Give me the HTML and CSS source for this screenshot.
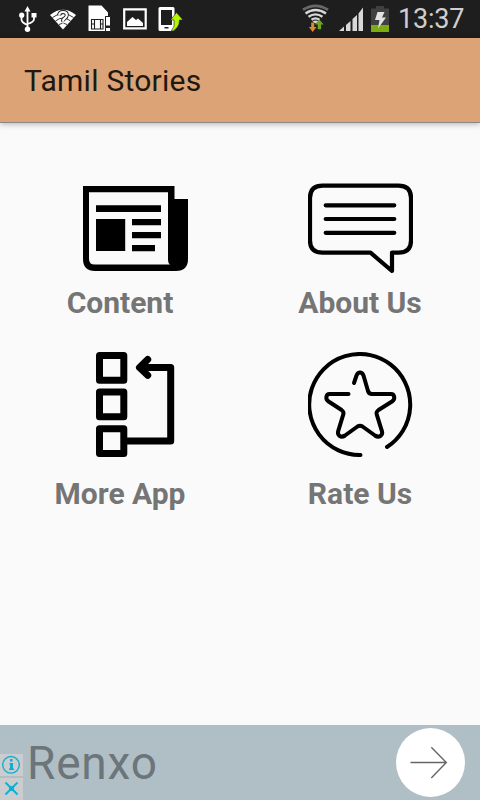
FILE: index.html
```html
<!DOCTYPE html>
<html lang="en">

<head>
    <meta charset="UTF-8">
    <meta name="viewport" content="width=device-width, initial-scale=1.0">
    <title>Tamil Stories</title>
    <link rel="stylesheet" href="styles.css">
</head>

<body>
    <!-- Status bar -->
    <div class="status-bar">
        <svg class="status-left" width="184" height="38" viewBox="0 0 184 38">
            <!-- USB -->
            <g fill="none" stroke="#fff" stroke-width="1.8">
                <path d="M27.500 30V9M21.500 16v3.500q0 3 6 5.500M34 16v3q0 3-6.500 5"></path>
                <path fill="#fff" stroke="none" d="M27.500 6l3 5.500h-6zM31.500 13h5v4.500h-5z"></path>
                <circle cx="21.700" cy="15.200" r="2.600" fill="#fff" stroke="none"></circle>
                <circle cx="27.500" cy="29.300" r="2.700" fill="#fff" stroke="none"></circle>
            </g>
            <!-- Unknown wifi -->
            <path fill="#fff" d="M50 15Q63 4.500 76 15L63 29.500z"></path>
            <path fill="none" stroke="#1e1e1e" stroke-width=".9" d="M52.500 17.500q10.500-8 21 0M55.500 21q7.500-6 15 0M59 24.500q4-3 8 0"></path>
            <path fill="none" stroke="#1e1e1e" stroke-width="4" d="M59.200 15.500q0-3.500 3.800-3.500t3.800 3q0 2-2 3.200t-1.800 3.300"></path>
            <path fill="none" stroke="#fff" stroke-width="2.200" d="M59.200 15.500q0-3.500 3.800-3.500t3.800 3q0 2-2 3.200t-1.800 3.300M63 23.500v3"></path>
            <!-- SIM card -->
            <path fill="#fff" d="M88.500 5.500h13l6.500 7v4h-3V31H88.500z"></path>
            <path fill="none" stroke="#1e1e1e" stroke-width="1.100" d="M91.500 19.500h11.500v9.500H91.500zM94.500 19.500v9.500M100.500 19.500v9.500M91.500 24h3M100.500 24h3"></path>
            <path fill="#fff" stroke="#1e1e1e" d="M105.500 16.500h5v9.500h-5zM105.500 27.500h5v4h-5z"></path>
            <!-- Picture -->
            <path fill="none" stroke="#fff" stroke-width="2.200" d="M124.200 9.300h21.500v19h-21.500z"></path>
            <path fill="#fff" d="M127 26v-4l5.500-5 3.500 3 2-1.500 5 4.500v3z"></path>
            <!-- Phone transfer -->
            <path fill="#fff" fill-rule="evenodd" d="M160 7h13q1.500 0 1.500 1.500v21q0 1.500-1.500 1.500h-13q-1.500 0-1.500-1.500v-21Q158.500 7 160 7zM161 10v15h11V10zM164.500 27v1.500h4V27z"></path>
            <path fill="#b4f500" stroke="#1e1e1e" stroke-width=".6" d="M176.500 12.500l6.500 7.500h-3.500q0 9-8.500 11.500 4.500-5 3-11.500h-3.500z"></path>
        </svg>
        <div class="status-right">
            <svg width="98" height="38" viewBox="300 0 98 38">
                <!-- Wifi -->
                <g fill="none" stroke="#d8d8d8" stroke-width="2.300">
                    <path stroke="#686868" stroke-width="2.800" d="M303 9.800q12.500-8 25 0"></path>
                    <path d="M305.500 13.500q10-7 20.500 0M308.500 16.800q7-5 14 0M311.500 19.800q4-2.800 8 0"></path>
                </g>
                <path fill="#d8d8d8" d="M312.500 21.500q3-2 6 0l-3 2z"></path>
                <path fill="#de8a2e" d="M311.200 22.500h3V27h2.300l-3.800 5-3.800-5h2.300z"></path>
                <path fill="#6ea61c" d="M317.700 29.200v-4.700h-2.500l4.200-5 4.200 5h-2.500v4.700z"></path>
                <!-- Signal -->
                <path fill="#d8d8d8" d="M339 31l5-4.500V31zM346 25l4.500-4v10H346zM352.500 19l4.500-4v16h-4.500zM358.500 13.500l4.500-6V31h-4.500z"></path>
                <!-- Battery -->
                <path fill="#404040" d="M376 6h8v2.500h5V25h-18V8.500h5z"></path>
                <path fill="#7cab13" d="M371 25h18v7h-18z"></path>
                <path fill="#e2e2e2" d="M377.500 12h7l-2.500 5.500h4l-8 11 1.500-8.500H375z"></path>
            </svg>
            <span class="clock">13:37</span>
        </div>
    </div>

    <!-- Title bar -->
    <header class="app-bar">
        <h1>Tamil Stories</h1>
    </header>

    <!-- Menu -->
    <main class="menu">
        <a class="menu-item shifted">
            <svg class="menu-icon" viewBox="83 176 105 105">
                <path fill-rule="evenodd" d="M83 186h91.500v13H188v60q0 12-12 12H95q-12 0-12-12zM89 192.200V259q0 5.600 5.600 5.600H170q-2-1.500-2-4.600v-67.800z"></path>
                <path d="M96 205.300h65v6.700H96zM96 219h29.200v32H96zM132 219h29v6.200h-29zM132 232h29v6.200h-29zM132 245h23v6.200h-23z"></path>
            </svg>
            <span>Content</span>
        </a>
        <a class="menu-item">
            <svg class="menu-icon" viewBox="308 176 105 105">
                <g fill="none" stroke="#000" stroke-width="4.200" stroke-linecap="round" stroke-linejoin="round">
                    <path d="M322.500 185.700H398.500Q411 185.700 411 198v42.500q0 12.200-12.500 12.200H392v18.300l-21.500-18.300h-48q-12.500 0-12.500-12.200V198q0-12.300 12.500-12.300z"></path>
                    <path d="M325.700 205.300h68.600M325.700 219h68.600M325.700 232.800h68.600"></path>
                </g>
            </svg>
            <span>About Us</span>
        </a>
        <a class="menu-item shifted">
            <svg class="menu-icon" viewBox="83 352 105 105">
                <g fill="none" stroke="#000" stroke-width="7" stroke-linejoin="round" stroke-linecap="round">
                    <path d="M99.500 355.500h24.300v24.700H99.500zM99.500 392h24.300v24.700H99.500zM99.500 428.700h24.300v24.700H99.500z"></path>
                    <path d="M125 441h45.700v-73.500H141"></path>
                    <path d="M147.700 359.500l-8.200 8 8.200 7.800"></path>
                </g>
            </svg>
            <span>More App</span>
        </a>
        <a class="menu-item">
            <svg class="menu-icon" viewBox="308 352 105 105">
                <g fill="none" stroke="#000" stroke-width="4" stroke-linecap="round" stroke-linejoin="round">
                    <path d="M360.500 455A50.500 50.500 0 1 1 387 447"></path>
                    <path d="M354 383l2.500-7.500q1.300-3 3.500-3t3.500 3l4.500 15.500q1 3 4 3h19q2.700 0 3.200 2.800t-2.200 4.700l-13.500 8.500q-2.500 1.800-1.800 4.300l5.300 17q.8 3.200-1.600 4.700t-5.400-.5l-12.500-9q-2.500-1.500-5 0l-12.500 9q-3 2-5.300.5t-1.600-4.700l5.200-17q.8-2.500-1.700-4.300l-13-8.500q-2.700-1.900-2.200-4.700t3.200-2.800H348.500"></path>
                </g>
            </svg>
            <span>Rate Us</span>
        </a>
    </main>

    <!-- Ad banner -->
    <footer class="ad-banner">
        <div class="ad-controls">
            <svg width="23" height="22" viewBox="0 0 23 22">
                <circle cx="11" cy="10.800" r="8.300" fill="none" stroke="#12aed0" stroke-width="1.400"></circle>
                <path fill="#12aed0" d="M10 5h2.500v2.500H10zM9.500 9H13v5.500h1V16H9v-1.500h1V10.500h-.5z"></path>
            </svg>
            <svg width="23" height="22" viewBox="0 0 23 22">
                <path fill="none" stroke="#12aed0" stroke-width="1.800" d="M5.500 4.500l12 12M17.500 4.500l-12 12"></path>
                <path fill="#12aed0" d="M9 8h5v5H9z"></path>
            </svg>
        </div>
        <span class="ad-title">Renxo</span>
        <div class="ad-arrow">
            <svg width="69" height="69" viewBox="0 0 69 69">
                <path fill="none" stroke="#666" stroke-width="1.400" d="M14.500 34.500h35.500M35.300 19.200l15 15.300-15 15.500"></path>
            </svg>
        </div>
    </footer>
</body>

</html>
```
FILE: styles.css
```css
body {
    font-family: Roboto, sans-serif;
    margin: 0;
    height: 800px;
    display: flex;
    flex-direction: column;
    background-color: #fafafa;
    overflow: hidden;
}

svg {
    display: block;
}

/* Status bar */
.status-bar {
    height: 38px;
    display: flex;
    justify-content: space-between;
    background-color: #1e1e1e;
}

.status-right {
    display: flex;
    width: 180px;
}

.clock {
    font-size: 27px;
    line-height: 39px;
    letter-spacing: -0.2px;
    color: #cfcfcf;
}

/* Title bar */
.app-bar {
    height: 84px;
    display: flex;
    align-items: center;
    padding-left: 24px;
    background-color: #dba376;
    border-bottom: 1px solid #8a8a84;
    box-shadow: 0 1px 6px rgba(0, 0, 0, 0.3);
}

.app-bar h1 {
    margin: 0;
    font-size: 30px;
    font-weight: 400;
    letter-spacing: 0.25px;
    color: #201810;
}

/* Menu */
.menu {
    flex: 1;
    display: grid;
    grid-template-columns: 240px 240px;
    grid-template-rows: 176px 176px;
    padding-top: 53px;
}

.menu-item {
    display: flex;
    flex-direction: column;
    align-items: center;
    font-size: 30px;
    font-weight: 700;
    line-height: 36px;
    color: #757575;
}

.menu-icon {
    width: 105px;
    height: 105px;
    margin-bottom: 4px;
}

.menu-item:nth-child(n+3) .menu-icon {
    margin-bottom: 19px;
}

/* Left column icons are indented a little more than their labels */
.shifted .menu-icon {
    margin-left: 31px;
}

/* Ad banner */
.ad-banner {
    height: 75px;
    display: flex;
    align-items: center;
    background-color: #b0bec5;
}

.ad-controls {
    align-self: flex-end;
    display: flex;
    flex-direction: column;
    gap: 2px;
}

.ad-controls svg {
    background-color: #cbcccd;
}

.ad-title {
    flex: 1;
    padding-left: 4px;
    font-size: 46px;
    letter-spacing: 0.8px;
    color: #6c7579;
}

.ad-arrow {
    width: 69px;
    height: 69px;
    margin-right: 15px;
    border-radius: 50%;
    background-color: #fff;
}
```
